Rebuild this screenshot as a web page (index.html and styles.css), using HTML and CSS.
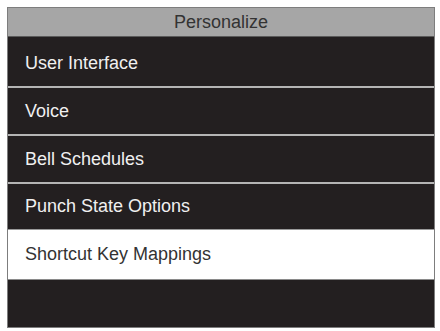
FILE: index.html
```html
<!DOCTYPE html>
<html>
<head>
<meta charset="utf-8">
<link rel="stylesheet" href="styles.css">
</head>
<body>
<div class="frame">
  <div class="header">Personalize</div>
  <div class="row row-first">User Interface</div>
  <div class="row">Voice</div>
  <div class="row">Bell Schedules</div>
  <div class="row row-last">Punch State Options</div>
  <div class="row row-selected">Shortcut Key Mappings</div>
  <div class="filler"></div>
</div>
</body>
</html>
```
FILE: styles.css
```css
html, body {
  margin: 0;
  padding: 0;
  background: #ffffff;
}
body {
  width: 440px;
  height: 331px;
  overflow: hidden;
  font-family: "Liberation Sans", Arial, sans-serif;
}
.frame {
  margin: 7px 0 0 7px;
  width: 428px;
  height: 321px;
  box-sizing: border-box;
  border: 1px solid #7d7d7d;
  background: #231f20;
  display: flex;
  flex-direction: column;
}
.header {
  height: 28px;
  flex: none;
  background: #a6a6a6;
  border-bottom: 1px solid #5a5a5a;
  color: #333333;
  font-size: 18px;
  line-height: 29px;
  text-align: center;
}
.row {
  flex: none;
  height: 46px;
  box-sizing: content-box;
  display: flex;
  align-items: center;
  padding-left: 17px;
  color: #f0f0f0;
  font-size: 18px;
  background: #231f20;
  border-bottom: 2px solid #b4b4b4;
}
.row-first {
  height: 46px;
  padding-top: 3px;
}
.row-last {
  height: 45px;
  border-bottom: 0;
}
.row-selected {
  height: 49px;
  background: #ffffff;
  color: #333333;
  border-top: 1px solid #9a9a9a;
  border-bottom: 1px solid #8a8a8a;
}
.filler {
  flex: 1;
  background: #231f20;
}
```
